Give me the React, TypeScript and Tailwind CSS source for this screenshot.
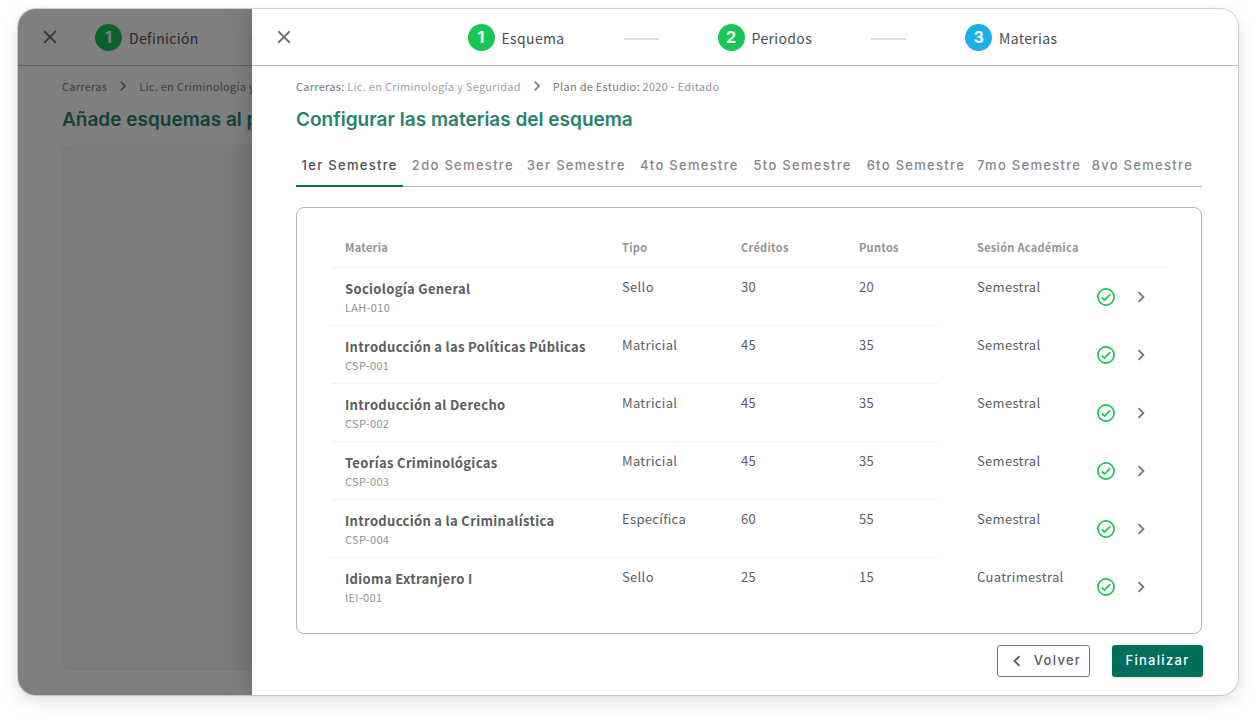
import { useState } from "react";
import clsx from "clsx";
import { MdChevronLeft, MdChevronRight, MdClose } from "react-icons/md";

type StepType = { number: number; label: string; color: string };
type SubjectType = {
  name: string;
  code: string;
  type: string;
  credits: number;
  points: number;
  session: string;
};

const steps: StepType[] = [
  { number: 1, label: "Esquema", color: "bg-[#17c653]" },
  { number: 2, label: "Periodos", color: "bg-[#17c653]" },
  { number: 3, label: "Materias", color: "bg-[#1cb0e8]" },
];

const semesters = ["1er", "2do", "3er", "4to", "5to", "6to", "7mo", "8vo"];

const subjects: SubjectType[] = [
  { name: "Sociología General", code: "LAH-010", type: "Sello", credits: 30, points: 20, session: "Semestral" },
  { name: "Introducción a las Políticas Públicas", code: "CSP-001", type: "Matricial", credits: 45, points: 35, session: "Semestral" },
  { name: "Introducción al Derecho", code: "CSP-002", type: "Matricial", credits: 45, points: 35, session: "Semestral" },
  { name: "Teorías Criminológicas", code: "CSP-003", type: "Matricial", credits: 45, points: 35, session: "Semestral" },
  { name: "Introducción a la Criminalística", code: "CSP-004", type: "Específica", credits: 60, points: 55, session: "Semestral" },
  { name: "Idioma Extranjero I", code: "IEI-001", type: "Sello", credits: 25, points: 15, session: "Cuatrimestral" },
];

const Step = ({ step }: { step: StepType }) => (
  <div className="flex shrink-0 items-center gap-[7px]">
    <span
      className={clsx(
        "flex size-[27px] items-center justify-center rounded-full font-['Inter',sans-serif] text-base font-bold text-white",
        step.color,
      )}
    >
      {step.number}
    </span>
    <span className="pt-0.5 text-sm leading-5 tracking-wide text-[#4d4f51]">
      {step.label}
    </span>
  </div>
);

const StepLine = () => <span className="mt-1 h-0.5 w-[35px] bg-[#dcddde]" />;

const CloseButton = () => (
  <button aria-label="Cerrar" className="shrink-0 text-[#6d6f71]">
    <MdClose className="size-[22px]" />
  </button>
);

const CheckCircle = () => (
  <svg viewBox="0 0 18 18" className="size-[18px]" fill="none" stroke="#17c653">
    <circle cx="9" cy="9" r="8.1" strokeWidth="1.7" />
    <path d="M4.8 9.4l2.7 2.6 5.6-5.7" strokeWidth="1.7" />
  </svg>
);

const Background = () => (
  <aside className="relative flex w-[234px] shrink-0 flex-col overflow-hidden whitespace-nowrap">
    <div className="flex h-[57px] shrink-0 items-center border-b border-[#bcbdbe] pl-[21px]">
      <CloseButton />
      <div className="ml-[34px] flex items-center gap-[52px]">
        <Step step={{ number: 1, label: "Definición", color: "bg-[#17c653]" }} />
        <StepLine />
      </div>
    </div>
    <div className="flex flex-1 flex-col pt-3 pb-[25px] pl-11">
      <nav className="flex items-center text-[11px] leading-4 tracking-wide text-[#808284]">
        <a href="#">Carreras</a>
        <MdChevronRight className="mx-2 size-4 shrink-0 scale-125" />
        <a href="#">Lic. en Criminología y</a>
      </nav>
      <h2 className="mt-[14px] font-['Inter',sans-serif] text-[19px] leading-6 font-semibold text-[#26836f]">
        Añade esquemas al plan
      </h2>
      <div className="mt-[13px] w-[500px] flex-1 rounded-lg border border-[#eeeeee] bg-[#f4f4f4]" />
    </div>
    <div className="absolute inset-0 bg-black/50" />
  </aside>
);

const SubjectsTable = () => (
  <div className="mt-5 rounded-lg border border-[#b4b5b6] px-[34px] pt-[18px] pb-[17px]">
    <table className="w-full table-fixed border-separate border-spacing-0 text-left">
      <colgroup>
        <col />
        <col className="w-[119px]" />
        <col className="w-[118px]" />
        <col className="w-[93px]" />
        <col className="w-[159px]" />
        <col className="w-[70px]" />
      </colgroup>
      <thead>
        <tr className="h-[42px] text-[11px] leading-4 tracking-wide text-[#929496] *:border-b *:border-[#f1f1f1] *:font-bold">
          <th className="pl-[14px]">Materia</th>
          <th className="pl-[14px]">Tipo</th>
          <th className="pl-[14px]">Créditos</th>
          <th className="pl-[14px]">Puntos</th>
          <th className="pl-[39px]">Sesión Académica</th>
          <th aria-label="Acciones" />
        </tr>
      </thead>
      <tbody>
        {subjects.map((subject, index) => {
          const cell = clsx(
            "pt-[9px] pl-[14px]",
            index < subjects.length - 1 && "border-b border-[#f1f1f1]",
          );
          return (
            <tr
              key={subject.code}
              className="h-[58px] align-top text-[13px] leading-5 tracking-wide text-[#5b5d5f]"
            >
              <td className={cell}>
                <p className="mt-0.5 font-bold">{subject.name}</p>
                <p className="text-[11px] leading-4 text-[#8f9193]">
                  {subject.code}
                </p>
              </td>
              <td className={cell}>{subject.type}</td>
              <td className={cell}>{subject.credits}</td>
              <td className={cell}>{subject.points}</td>
              <td className="pt-[9px] pl-[39px]">{subject.session}</td>
              <td className="align-middle">
                <div className="flex items-center gap-[15px]">
                  <CheckCircle />
                  <button
                    aria-label={`Abrir ${subject.name}`}
                    className="text-[#77797b]"
                  >
                    <MdChevronRight className="size-[22px]" />
                  </button>
                </div>
              </td>
            </tr>
          );
        })}
      </tbody>
    </table>
  </div>
);

const App = () => {
  const [activeSemester, setActiveSemester] = useState(0);

  return (
    <div className="bg-white px-[18px] pt-[9px] pb-[27px] font-['Noto_Sans_CJK_SC',sans-serif]">
      <div className="flex overflow-hidden rounded-[18px] bg-white shadow-[0_0_1px_1px_rgba(0,0,0,0.18),0_6px_18px_rgba(0,0,0,0.12)]">
        <Background />
        <main className="relative min-w-0 flex-1 bg-white shadow-[0_0_24px_rgba(0,30,20,0.25)]">
          <header className="flex h-[57px] items-center border-b border-[#b4b5b6] pr-2 pl-[21px]">
            <CloseButton />
            <div className="flex flex-1 items-center justify-center gap-[59px]">
              <Step step={steps[0]} />
              <StepLine />
              <Step step={steps[1]} />
              <StepLine />
              <Step step={steps[2]} />
            </div>
          </header>
          <div className="pt-3 pr-9 pb-[18px] pl-11">
            <nav className="flex items-center text-[11px] leading-4 tracking-wide text-[#a0a2a4]">
              <a href="#">
                <span className="text-[#77797b]">Carreras:</span> Lic. en
                Criminología y Seguridad
              </a>
              <MdChevronRight className="mx-2 size-4 shrink-0 scale-125 text-[#77797b]" />
              <a href="#">
                <span className="text-[#77797b]">Plan de Estudio:</span>{" "}
                <span className="text-[#8f9193]">2020 - Editado</span>
              </a>
            </nav>
            <h1 className="mt-[14px] font-['Inter',sans-serif] text-[19px] leading-6 font-semibold text-[#26836f]">
              Configurar las materias del esquema
            </h1>
            <div
              role="tablist"
              className="mt-[10px] grid grid-cols-8 gap-1.5 border-b border-[#b4b5b6] pr-1.5"
            >
              {semesters.map((semester, index) => (
                <button
                  key={semester}
                  role="tab"
                  aria-selected={index === activeSemester}
                  onClick={() => setActiveSemester(index)}
                  className={clsx(
                    "-mb-px h-[45px] border-b-2 pt-1 font-['Inter',sans-serif] text-[13px] font-medium tracking-widest whitespace-nowrap",
                    index === activeSemester
                      ? "border-[#00705a] text-[#4d4f51]"
                      : "border-transparent text-[#85878a]",
                  )}
                >
                  {semester} Semestre
                </button>
              ))}
            </div>
            <SubjectsTable />
            <div className="-mr-px mt-[11px] flex justify-end gap-[22px] font-['Inter',sans-serif] text-[13px] font-medium tracking-widest">
              <button className="flex h-8 w-[93px] items-center justify-center gap-1.5 rounded-[3px] border border-[#77797b] text-[#5b5d5f]">
                <MdChevronLeft className="size-[22px]" />
                Volver
              </button>
              <button className="h-8 w-[91px] rounded-[3px] bg-[#006e5a] text-white shadow-sm">
                Finalizar
              </button>
            </div>
          </div>
        </main>
      </div>
    </div>
  );
};

export default App;
